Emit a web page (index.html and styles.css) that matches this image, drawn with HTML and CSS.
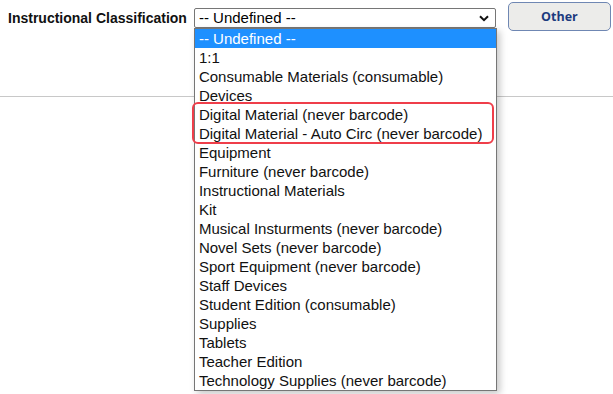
FILE: index.html
```html
<!DOCTYPE html>
<html lang="en">
  <head>
    <meta charset="UTF-8" />
    <meta name="viewport" content="width=device-width, initial-scale=1.0" />
    <title>Instructional Classification</title>
    <link rel="stylesheet" href="styles.css">
  </head>

  <body>
    <div class="header">
      <label class="field-label">Instructional Classification</label>

      <div class="select-wrap">
        <div class="select">
          <span>-- Undefined --</span>
          <svg class="chevron" width="10" height="7" viewBox="0 0 10 7">
            <path d="M1 1.2 L5 5.2 L9 1.2" fill="none" stroke="#111" stroke-width="2" />
          </svg>
        </div>

        <!-- open list -->
        <div class="dropdown">
          <div class="option selected">-- Undefined --</div>
          <div class="option">1:1</div>
          <div class="option">Consumable Materials (consumable)</div>
          <div class="option">Devices</div>
          <div class="marked">
            <div class="option">Digital Material (never barcode)</div>
            <div class="option">Digital Material - Auto Circ (never barcode)</div>
          </div>
          <div class="option">Equipment</div>
          <div class="option">Furniture (never barcode)</div>
          <div class="option">Instructional Materials</div>
          <div class="option">Kit</div>
          <div class="option">Musical Insturments (never barcode)</div>
          <div class="option">Novel Sets (never barcode)</div>
          <div class="option">Sport Equipment (never barcode)</div>
          <div class="option">Staff Devices</div>
          <div class="option">Student Edition (consumable)</div>
          <div class="option">Supplies</div>
          <div class="option">Tablets</div>
          <div class="option">Teacher Edition</div>
          <div class="option">Technology Supplies (never barcode)</div>
        </div>
      </div>

      <button class="btn-other" type="button">Other</button>
    </div>

    <div class="divider"></div>
  </body>
</html>
```

FILE: styles.css
```css
html,
body {
  min-height: 100vh;
}

body {
  font-family: "Liberation Sans", Arial, sans-serif;
  background-color: white;
  margin: 0;
  padding: 0;
  color: #000;
}

.header {
  display: flex;
  align-items: flex-start;
  padding: 2px 0 0 8px;
  position: relative;
  z-index: 2;
}

.field-label {
  font-weight: bold;
  font-size: 14px;
  line-height: 16px;
  margin-top: 8px;
  color: #111;
}

.select-wrap {
  position: relative;
  margin-left: 7px;
  margin-top: 6px;
}

.select {
  box-sizing: border-box;
  width: 302px;
  height: 20px;
  border: 1px solid #767676;
  border-radius: 2px;
  display: flex;
  align-items: center;
  justify-content: space-between;
  padding: 0 6px 0 4px;
  font-size: 15px;
  line-height: 18px;
}

.chevron {
  display: block;
}

.dropdown {
  position: absolute;
  top: 100%;
  left: 0;
  width: 303px;
  box-sizing: border-box;
  border: 1px solid #767676;
  background-color: white;
  box-shadow: 3px 3px 7px rgba(0, 0, 0, 0.22);
  z-index: 2;
}

.option {
  height: 19px;
  line-height: 19px;
  padding-left: 4px;
  font-size: 15px;
  white-space: nowrap;
  color: #111;
}

.option.selected {
  background-color: #1e90ff;
  color: white;
}

.marked {
  position: relative;
}

.marked::after {
  content: "";
  position: absolute;
  left: -3px;
  right: 2px;
  top: -3px;
  bottom: -1px;
  border: 2px solid #ef3e4a;
  border-radius: 6px;
}

.btn-other {
  box-sizing: border-box;
  width: 103px;
  height: 29px;
  margin-left: 12px;
  border: 1px solid #6f87b3;
  border-radius: 5px;
  background-color: #ececea;
  color: #1c3b7e;
  font-family: "Open Sans", sans-serif;
  font-weight: bold;
  font-size: 12.5px;
  cursor: pointer;
}

.divider {
  margin-top: 65px;
  border-top: 1px solid #c8c8c8;
}
```
